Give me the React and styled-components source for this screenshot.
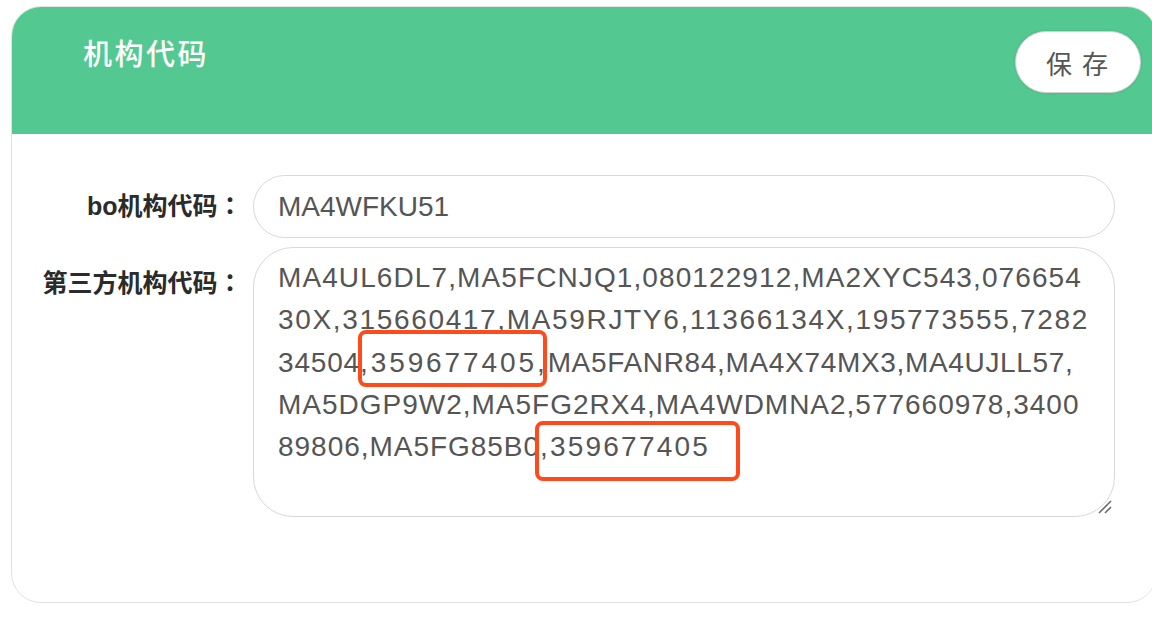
import React from 'react'
import styled, { createGlobalStyle } from 'styled-components'

const GlobalStyle = createGlobalStyle`
    html, body {
        margin: 0;
        padding: 0;
        background: #ffffff;
    }
    body {
        font-family: 'Liberation Sans', 'Noto Sans CJK SC', sans-serif;
    }
`

// each line of the code list, split where a highlight box sits; ls = letter-spacing
const lines = [
    [{ text: 'MA4UL6DL7,MA5FCNJQ1,080122912,MA2XYC543,076654', ls: 1.1 }],
    [{ text: '30X,315660417,MA59RJTY6,11366134X,195773555,7282', ls: 1.66 }],
    [
        { text: '34504', ls: 0.83 },
        { text: ',359677405,', ls: 2.9, mark: { top: -17, right: 1, bottom: -9, left: -2 } },
        { text: 'MA5FANR84,MA4X74MX3,MA4UJLL57,', ls: 0.67 },
    ],
    [{ text: 'MA5DGP9W2,MA5FG2RX4,MA4WDMNA2,577660978,3400', ls: 0.99 }],
    [
        { text: '89806,MA5FG85B0', ls: 0.97 },
        { text: ',359677405', ls: 2.2, mark: { top: -10, right: -30, bottom: -19, left: -5 } },
    ],
]

export default function App() {
    return (
        <Page>
            <GlobalStyle />
            <Card>
                <Header>
                    <Title>机构代码</Title>
                    <SaveButton>保 存</SaveButton>
                </Header>
                <Form>
                    <Label>bo机构代码<Colon>：</Colon></Label>
                    <Input>MA4WFKU51</Input>
                    <Label $offset={14}>第三方机构代码<Colon>：</Colon></Label>
                    <TextArea>
                        {lines.map((line, i) => (
                            <Line key={i}>
                                {line.map((seg, j) =>
                                    seg.mark ? (
                                        <Marked key={j} $ls={seg.ls} $m={seg.mark}>{seg.text}</Marked>
                                    ) : (
                                        <Segment key={j} $ls={seg.ls}>{seg.text}</Segment>
                                    )
                                )}
                            </Line>
                        ))}
                        <ResizeGrip viewBox="0 0 16 16">
                            <line x1="3" y1="15" x2="15" y2="3" stroke="#6b6b6b" strokeWidth="1.6" />
                            <line x1="9" y1="15" x2="15" y2="9" stroke="#6b6b6b" strokeWidth="1.6" />
                        </ResizeGrip>
                    </TextArea>
                </Form>
            </Card>
        </Page>
    )
}

const Page = styled.div`
    width: 1152px;
    height: 628px;
    overflow: hidden;
    padding-top: 6px;
    box-sizing: border-box;
`

const Card = styled.div`
    margin-left: 11px;
    width: 1146px;
    border: 1.5px solid #e2e2e2;
    border-radius: 30px;
    overflow: hidden;
    background: #ffffff;
    box-sizing: border-box;
`

const Header = styled.div`
    height: 127px;
    background-color: #53c991;
    display: flex;
    justify-content: space-between;
    align-items: flex-start;
    padding: 0 15px 0 71px;
    box-sizing: border-box;
`

const Title = styled.h1`
    margin: 28px 0 0;
    font-size: 29px;
    line-height: 35px;
    font-weight: 500;
    letter-spacing: 2.5px;
    color: #ffffff;
    font-family: 'Noto Sans CJK SC', sans-serif;
`

const SaveButton = styled.button`
    margin-top: 24px;
    width: 126px;
    height: 62px;
    border-radius: 31px;
    border: 1.5px solid #cfcfcf;
    background: #ffffff;
    box-shadow: 0 0 3px rgba(0, 0, 0, 0.12);
    font-family: 'Noto Sans CJK SC', sans-serif;
    font-size: 26px;
    letter-spacing: 2px;
    color: #555555;
    cursor: pointer;
`

const Form = styled.div`
    display: grid;
    grid-template-columns: 200px 862px;
    column-gap: 18px;
    row-gap: 9px;
    padding: 41px 0 85px 23px;
`

const Label = styled.div`
    text-align: right;
    font-size: 25px;
    font-weight: bold;
    color: #2b2b2b;
    white-space: nowrap;
    padding-top: ${p => p.$offset || 0}px;
    line-height: ${p => (p.$offset ? '44px' : '63px')};
`

const Colon = styled.span`
    font-family: 'Noto Sans CJK TC', sans-serif;
    line-height: 1;
    margin-right: -7.5px;
`

const Input = styled.div`
    height: 63px;
    border: 1.5px solid #d8d8d8;
    border-radius: 32px;
    padding: 0 24px;
    box-sizing: border-box;
    display: flex;
    align-items: center;
    font-size: 28px;
    color: #555555;
`

const TextArea = styled.div`
    position: relative;
    height: 270px;
    border: 1.5px solid #d8d8d8;
    border-radius: 40px;
    padding: 9px 24px;
    box-sizing: border-box;
    font-size: 28px;
    line-height: 42.3px;
    color: #555555;
`

const Line = styled.div`
    white-space: nowrap;
`

const Segment = styled.span`
    letter-spacing: ${p => p.$ls}px;
`

const Marked = styled(Segment)`
    position: relative;

    &::after {
        content: '';
        position: absolute;
        top: ${p => p.$m.top}px;
        right: ${p => p.$m.right}px;
        bottom: ${p => p.$m.bottom}px;
        left: ${p => p.$m.left}px;
        border: 4px solid #ff4a1c;
        border-radius: 8px;
    }
`

const ResizeGrip = styled.svg`
    position: absolute;
    right: 2px;
    bottom: 2px;
    width: 16px;
    height: 16px;
`
